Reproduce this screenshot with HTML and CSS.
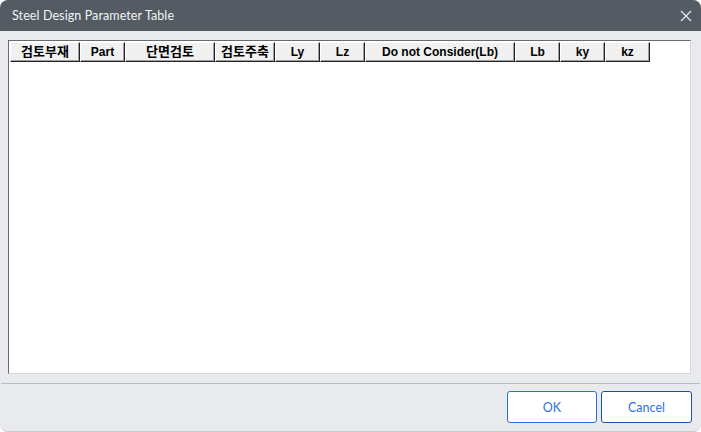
FILE: index.html
```html
<!DOCTYPE html>
<html>
<head>
<meta charset="utf-8">
<link rel="stylesheet" href="styles.css">
</head>
<body>
<div class="window">
  <div class="titlebar">
    <span class="title">Steel Design Parameter Table</span>
    <svg class="close" width="12" height="12" viewBox="0 0 12 12"><path d="M1 1L11 11M11 1L1 11" stroke="#e6e8eb" stroke-width="1.3" fill="none"/></svg>
  </div>
  <div class="content">
    <div class="panel">
      <div class="header">
        <div class="cell ko w70">검토부재</div>
        <div class="cell w45">Part</div>
        <div class="cell ko w90">단면검토</div>
        <div class="cell ko w60">검토주축</div>
        <div class="cell w45">Ly</div>
        <div class="cell w45">Lz</div>
        <div class="cell w150">Do not Consider(Lb)</div>
        <div class="cell w45">Lb</div>
        <div class="cell w45">ky</div>
        <div class="cell w45">kz</div>
      </div>
    </div>
  </div>
  <div class="separator"></div>
  <div class="footer">
    <button class="btn">OK</button>
    <button class="btn focus">Cancel</button>
  </div>
</div>
</body>
</html>
```
FILE: styles.css
```css
html, body {
  margin: 0;
  padding: 0;
  background: #ffffff;
}
.window {
  width: 701px;
  height: 432px;
  box-sizing: border-box;
  background: #e9eaee;
  border-radius: 8px;
  overflow: hidden;
  border-bottom: 1px solid #c9cacd;
  display: flex;
  flex-direction: column;
}
.titlebar {
  height: 31px;
  flex: none;
  background: #545b63;
  display: flex;
  align-items: center;
  justify-content: space-between;
  padding: 0 9px 0 12px;
}
.title {
  color: #f2f3f5;
  font-family: Lato, "Noto Sans", sans-serif;
  font-size: 12.5px;
  letter-spacing: 0.1px;
}
.close {
  display: block;
}
.content {
  padding: 9px 10px 0 8px;
  flex: none;
}
.panel {
  height: 334px;
  box-sizing: border-box;
  background: #ffffff;
  border-top: 1px solid #6a6a6a;
  border-left: 1px solid #6a6a6a;
  border-right: 1px solid #d8d8d8;
  border-bottom: 1px solid #d8d8d8;
  padding: 1px 0 0 1px;
}
.header {
  display: flex;
}
.cell {
  height: 20px;
  box-sizing: border-box;
  background: #f0f0f0;
  border-top: 1px solid #ffffff;
  border-left: 1px solid #ffffff;
  border-right: 1px solid #222222;
  border-bottom: 1px solid #222222;
  box-shadow: inset -1px -1px 0 #a0a0a0;
  display: flex;
  align-items: center;
  justify-content: center;
  font-family: "Liberation Sans", Arial, "Noto Sans CJK KR", sans-serif;
  font-weight: bold;
  font-size: 12px;
  color: #000000;
  line-height: 1;
}
.cell.ko {
  font-family: "Noto Sans CJK KR", sans-serif;
  font-size: 13px;
  padding-bottom: 3px;
}
.w70 { width: 70px; }
.w45 { width: 45px; }
.w90 { width: 90px; }
.w60 { width: 60px; }
.w150 { width: 150px; }
.separator {
  margin-top: 9px;
  height: 1px;
  background: #bcbdc0;
  flex: none;
  margin-left: 1px;
  margin-right: 1px;
}
.footer {
  display: flex;
  justify-content: flex-end;
  gap: 4px;
  padding: 7px 9px 0 0;
}
.btn {
  width: 90px;
  height: 32px;
  box-sizing: border-box;
  background: #ffffff;
  border: 1px solid #2b6fdc;
  border-radius: 3px;
  color: #2e6fdd;
  font-family: Lato, "Noto Sans", sans-serif;
  font-size: 12.5px;
  padding: 0;
}
.btn.focus {
  width: 91px;
  border-color: #1b4ea8;
}
```
